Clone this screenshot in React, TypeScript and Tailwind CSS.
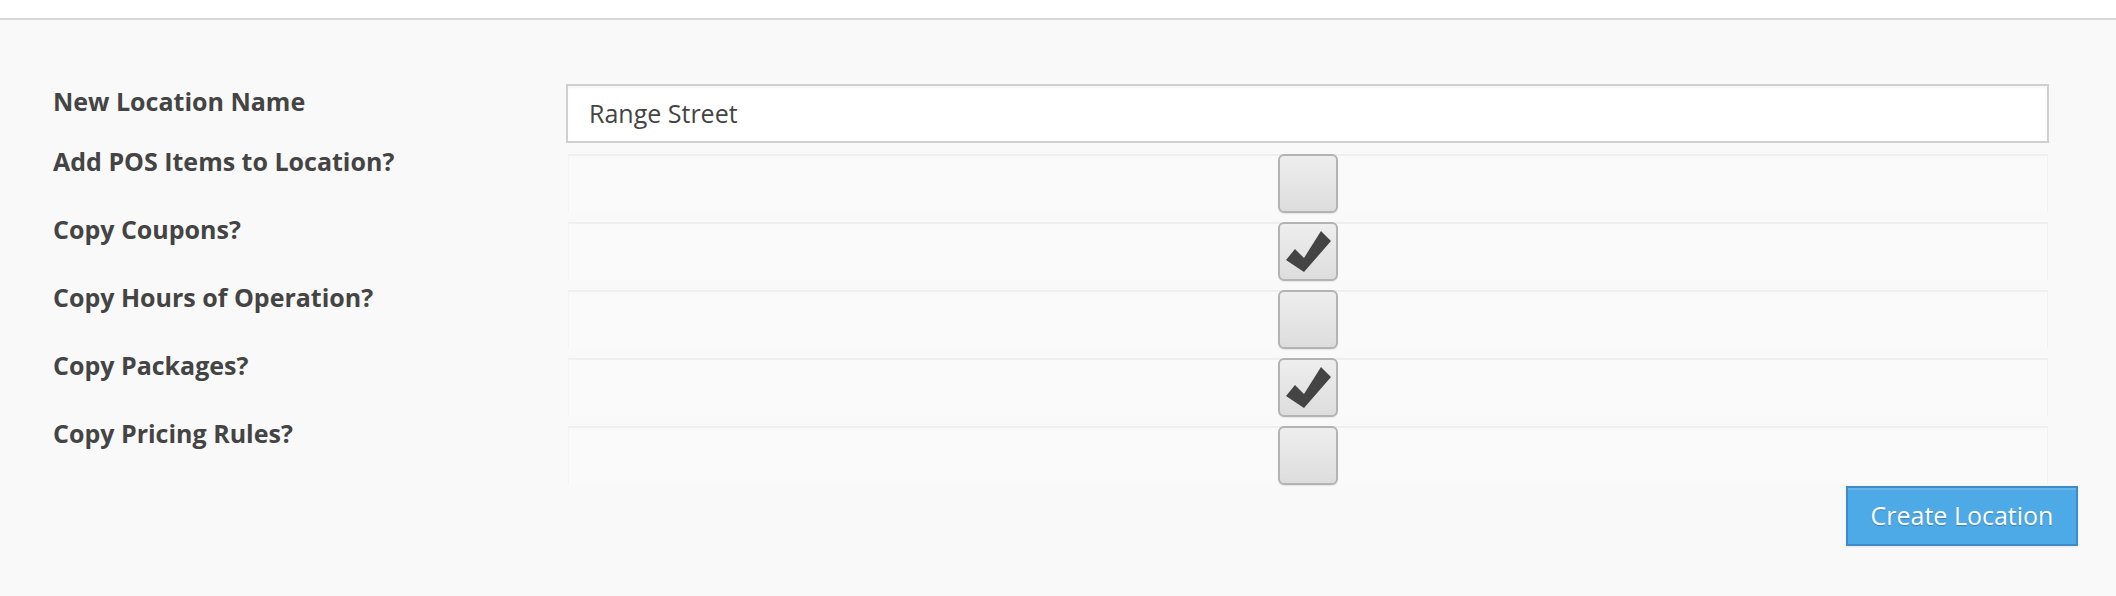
import React from "react";

const rows = [
  { label: "Add POS Items to Location?", checked: false },
  { label: "Copy Coupons?", checked: true },
  { label: "Copy Hours of Operation?", checked: false },
  { label: "Copy Packages?", checked: true },
  { label: "Copy Pricing Rules?", checked: false },
];

function Check({ checked }: { checked: boolean }) {
  return (
    <div className="-mt-[2px] h-[59px] w-[60px] rounded-[6px] border-2 border-[#b3b3b3] bg-gradient-to-b from-[#eeeeee] to-[#dddddd] shadow-[0_1px_1px_rgba(0,0,0,0.08)]">
      {checked && (
        <svg viewBox="0 0 56 55" className="h-full w-full">
          <polygon points="6,36 15,25 24,34 41,7 51,17 24,48" fill="#444444" />
        </svg>
      )}
    </div>
  );
}

export default function App() {
  return (
    <div
      className="min-h-[596px] w-full bg-[#f9f9f9] text-[#444444]"
      style={{ fontFamily: '"Open Sans", "Noto Sans", sans-serif' }}
    >
      <div className="h-[20px] border-b-2 border-[#d9d9d9] bg-white" />
      <div className="pl-[53px] pr-[67px] pt-[64px]">
        <div className="flex h-[60px] items-start">
          <label className="w-[513px] shrink-0 text-[25px] font-bold leading-[34px] text-[#444]">
            New Location Name
          </label>
          <div className="flex h-[59px] flex-1 items-center border-2 border-[#d0d0d0] bg-white pl-[21px] text-[25px] text-[#444] shadow-[inset_0_2px_2px_rgba(0,0,0,0.04)]">
            Range Street
          </div>
        </div>
        {rows.map((r) => (
          <div key={r.label} className="flex h-[68px] items-start">
            <label className="w-[513px] shrink-0 text-[25px] font-bold leading-[34px] text-[#444]">
              {r.label}
            </label>
            <div className="flex-1 pt-[10px] pl-[2px] pr-[1px]">
              <div className="flex h-[58px] justify-center border-t-2 border-l border-r border-t-[#efefef] border-l-[#f3f3f3] border-r-[#f1f1f1] bg-[#fafafa]">
                <Check checked={r.checked} />
              </div>
            </div>
          </div>
        ))}
      </div>
      <div className="mt-[2px] flex justify-end pr-[38px]">
        <button className="h-[60px] w-[232px] border-2 border-[#3e8cc6] bg-[#4eaae6] text-[25px] text-white shadow-[inset_0_2px_0_rgba(255,255,255,0.15),0_1px_2px_rgba(0,0,0,0.08)] [text-shadow:0_1px_1px_rgba(0,0,0,0.25)]">
          Create Location
        </button>
      </div>
    </div>
  );
}
